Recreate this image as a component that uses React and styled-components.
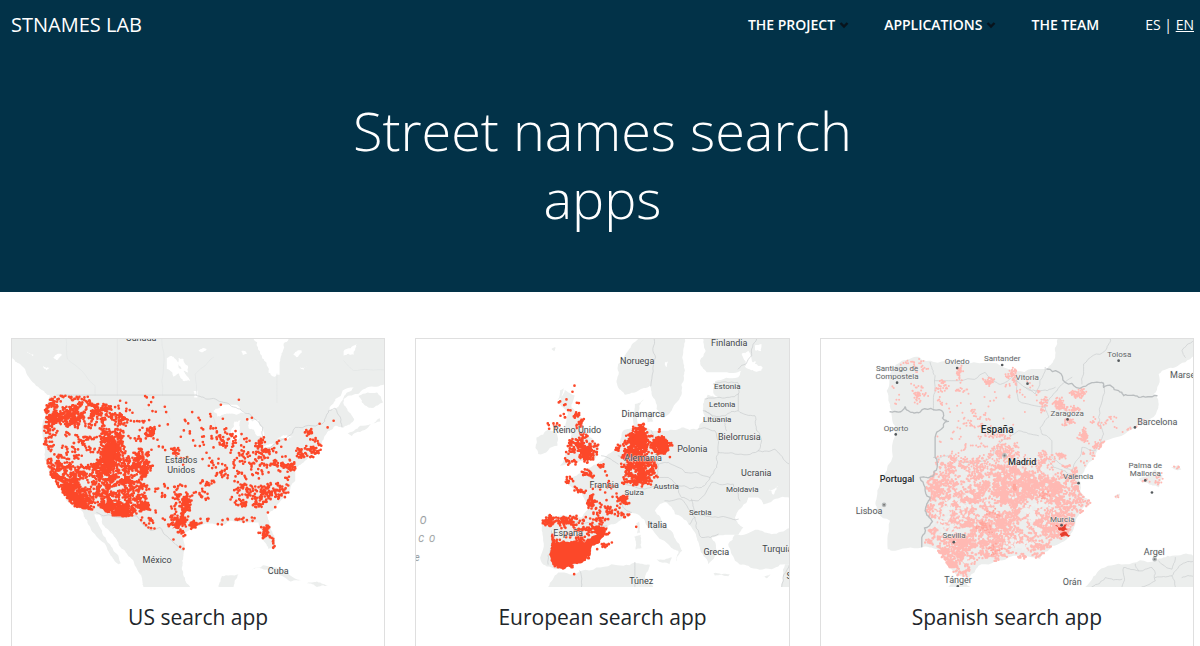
import React from 'react'
import styled, { createGlobalStyle } from 'styled-components';


const GlobalStyle = createGlobalStyle`
  * {
    box-sizing: border-box;
  }
  body {
    margin: 0;
    background: #fff;
    color: #212529;
    font-family: "Open Sans", "Noto Sans", sans-serif;
  }
`;

const Header = styled.header`
  padding: 0 6px 0 11px;
  background: #023248;
  color: #fff;
`;

const TopBar = styled.div`
  display: flex;
  align-items: center;
  justify-content: space-between;
  padding: 9px 0 11px;
`;

const Brand = styled.a`
  color: #fff;
  font-size: 20px;
  line-height: 32px;
  text-decoration: none;
`;

const Nav = styled.nav`
  display: flex;
  align-items: center;
  gap: 35px;
`;

const NavButton = styled.button`
  display: flex;
  align-items: center;
  gap: 4px;
  padding: 0;
  border: 0;
  background: none;
  color: #fff;
  font-family: inherit;
  font-size: 14px;
  font-weight: 600;
  line-height: 20px;
`;

const NavLink = styled.a`
  color: #fff;
  font-size: 14px;
  font-weight: 600;
  line-height: 20px;
  text-decoration: none;
`;

const Languages = styled.div`
  margin-left: 11px;
  font-size: 14px;
  line-height: 20px;
`;

const LanguageLink = styled.a`
  color: #fff;
  text-decoration: ${({ $active }) => ($active ? 'underline' : 'none')};
`;

const Title = styled.h1`
  max-width: 50%;
  margin: 0 auto;
  padding: 44px 0 60px;
  font-size: 54px;
  font-weight: 300;
  line-height: 68px;
  text-align: center;
`;

const CardList = styled.main`
  display: grid;
  grid-template-columns: repeat(3, 1fr);
  gap: 30px;
  padding: 46px 6px 0 11px;
`;

const Card = styled.article`
  border: 1px solid #dfdfdf;
  padding-bottom: 40px;
`;

const MapSvg = styled.svg`
  display: block;
  width: 100%;
  height: auto;
  background: #fff;
`;

const MapLabel = styled.text`
  fill: ${({ $tone }) => $tone || '#3f4548'};
  stroke: #f3f5f4;
  stroke-width: 1px;
  stroke-opacity: 0.7;
  paint-order: stroke;
  font-family: Roboto, sans-serif;
  font-size: ${({ $size }) => $size || 9}px;
  font-weight: ${({ $weight }) => $weight || 400};
  font-style: ${({ $italic }) => ($italic ? 'italic' : 'normal')};
  text-anchor: middle;
`;

const CardTitle = styled.h2`
  margin: 15px 0 0;
  font-size: 21px;
  font-weight: 400;
  line-height: 30px;
  text-align: center;
`;


// small seeded generator, so that the maps are the same on every load
const createRandom = (seed) => () => {
  seed = (seed * 1664525 + 1013904223) % 4294967296;
  return seed / 4294967296;
}

const parse = (str) => str.trim().split(/\s+/).map((p) => p.split(',').map(Number));

// splits each segment and moves its middle a little, like a coast line
const rough = (str, closed, amount = 0.12) => {
  const random = createRandom(str.length * 97 + 5);
  let pts = parse(str);
  if (closed) pts.push(pts[0]);
  for (let k = 0; k < 3; k++) {
    const next = [pts[0]];
    for (let i = 1; i < pts.length; i++) {
      const [ax, ay] = pts[i - 1];
      const [bx, by] = pts[i];
      const m = (random() - 0.5) * 2 * amount;
      const flat = ax === bx || ay === by;
      next.push([
        (ax + bx) / 2 + (flat ? 0 : (by - ay) * m),
        (ay + by) / 2 - (flat ? 0 : (bx - ax) * m),
      ], pts[i]);
    }
    pts = next;
  }
  return 'M' + pts.map(([x, y]) => `${Math.round(x)},${Math.round(y)}`).join('L') + (closed ? 'Z' : '');
}

const inside = (x, y, poly) => {
  let hit = false;
  for (let i = 0, j = poly.length - 1; i < poly.length; j = i++) {
    const [xi, yi] = poly[i];
    const [xj, yj] = poly[j];
    if ((yi > y) !== (yj > y) && x < ((xj - xi) * (y - yi)) / (yj - yi) + xi) hit = !hit;
  }
  return hit;
}

// groups: [cx, cy, rx, ry, count, clump size]
const scatter = ({ groups, bounds, seed, density = 1 }) => {
  const random = createRandom(seed);
  const poly = bounds && parse(bounds);
  let d = '';
  groups.forEach(([cx, cy, rx, ry, count, clump = 1]) => {
    for (let i = 0; i < count * density; i += clump) {
      const angle = random() * Math.PI * 2;
      const r = Math.sqrt(random());
      let x = cx + Math.cos(angle) * r * rx;
      let y = cy + Math.sin(angle) * r * ry;
      for (let c = 0; c < clump; c++) {
        if (!poly || inside(x, y, poly)) d += `M${Math.round(x)} ${Math.round(y)}h.1`;
        x += (random() - 0.5) * 20;
        y += (random() - 0.5) * 16;
      }
    }
  });
  return d;
}

const US_WEST = '152,194 135,235 131,330 135,385 150,430 190,490 215,525 262,535 330,552 375,558 410,555 450,595 500,598 550,655 560,610 600,575 640,500 640,300 600,194';
const IBERIA = '248,180 262,120 290,90 340,78 390,95 455,100 590,108 680,115 725,115 850,160 890,155 955,195 1055,205 1055,240 990,290 900,330 860,390 820,440 825,480 857,515 815,560 795,615 740,645 705,685 600,687 520,705 490,740 455,735 430,710 395,655 352,645 380,570 360,540 375,500 350,440 385,435 390,380 390,320 430,270 410,240 310,240 255,243';

const MAPS = [
  {
    title: 'US search app',
    origin: [36, 25],
    land: [
      '36,25 36,80 60,100 90,145 130,180 150,195 133,235 130,330 133,385 150,430 190,490 215,525 245,540 262,570 285,610 310,635 330,670 355,700 362,697 345,665 320,630 300,590 283,550 300,552 315,590 345,620 375,660 400,690 425,740 430,768 570,768 555,745 545,710 550,670 553,640 545,610 575,590 620,578 665,585 690,570 740,575 775,575 785,600 790,630 805,655 825,650 822,615 808,580 800,550 830,525 860,490 885,450 885,410 910,395 945,365 965,335 985,300 1005,285 1030,290 1062,265 1042,240 1030,205 1070,190 1100,170 1154,160 1154,25',
      '655,768 665,735 715,730 700,768',
      '755,715 790,703 850,720 908,747 870,752 820,722 780,712',
      '920,757 950,752 988,765 950,768',
      '1042,308 1080,285 1138,262 1140,272 1085,300 1055,316',
      '1075,195 1130,185 1148,215 1115,232 1085,215',
    ],
    water: [
      '760,25 865,25 848,60 838,95 838,132 822,138 800,105 785,75',
      '640,240 665,222 710,222 745,245 710,252 680,248 650,258',
      '702,272 722,268 718,300 708,342 692,330 692,300',
      '740,262 775,268 790,300 788,325 765,305 745,292',
      '775,360 800,342 835,333 810,350',
      '832,325 850,313 880,316 860,328',
      '500,82 520,78 535,110 555,130 570,150 552,152 535,128 520,138 500,115',
      '535,82 550,85 563,128 550,120',
      '580,182 592,180 592,200 582,200',
      '80,60 100,72 98,76 82,66',
      '130,105 150,112 140,120',
      '160,80 185,70 170,88',
      '595,60 620,55 605,65',
      '725,60 740,68 728,72',
      '880,70 905,60 890,80',
      '900,110 925,105 910,118',
      '1030,62 1070,40 1060,72 1030,75',
      '985,240 1005,205 1060,170 1030,200',
    ],
    borders: ['588,193 620,205 670,215 720,235 760,262 788,290 790,325 775,358 830,335 885,290 965,280 985,240 1005,233 1025,288', '170,193 588,193', '290,545 345,558 410,555 450,598 480,590 520,635 550,660'],
    faint: ['198,25 202,85 285,165 285,193', '352,25 352,193', '485,25 487,193', '588,193 585,130 640,80', '830,130 830,215', '1030,90 1060,120 1154,118', '430,235 500,240 510,265', '640,260 650,330'],
    dots: [
      { color: '#fc4829', size: 8, seed: 11, density: 0.85, bounds: US_WEST, groups: [
        [215, 235, 90, 50, 260, 3], [200, 262, 70, 18, 190, 4], [320, 262, 60, 40, 160, 3],
        [145, 300, 22, 110, 130, 4], [205, 330, 70, 75, 80, 2], [330, 350, 40, 55, 200, 4],
        [180, 440, 45, 50, 280, 4], [215, 490, 40, 35, 280, 4], [247, 514, 24, 22, 200, 4],
        [255, 400, 80, 60, 180, 3], [360, 420, 80, 40, 340, 4], [425, 400, 20, 65, 170, 4],
        [335, 505, 60, 35, 200, 4], [355, 535, 42, 25, 240, 4], [300, 455, 95, 40, 180, 3],
        [325, 390, 22, 85, 220, 4], [430, 525, 18, 16, 80, 3], [450, 304, 13, 15, 50, 2],
        [440, 580, 26, 16, 24, 3], [408, 548, 25, 20, 22, 2], [553, 530, 20, 30, 60, 3],
        [538, 572, 20, 20, 70, 3], [548, 480, 22, 20, 28, 3], [500, 520, 45, 70, 48, 2],
        [470, 290, 90, 105, 14, 1], [515, 360, 28, 14, 22, 2], [385, 290, 50, 55, 50, 2],
        [260, 320, 30, 12, 26, 2], [400, 480, 40, 30, 120, 4],
      ] },
      { color: '#fc4829', size: 8, seed: 24, density: 0.85, groups: [
        [610, 290, 50, 40, 20, 2], [590, 370, 60, 45, 16], [660, 420, 26, 22, 26, 2],
        [620, 475, 36, 32, 40, 2], [560, 520, 12, 26, 22, 3],
        [582, 582, 10, 10, 26, 3], [675, 325, 34, 24, 42, 2], [740, 360, 50, 42, 38, 2],
        [775, 338, 10, 8, 22, 3], [740, 400, 45, 38, 48, 2], [750, 495, 56, 38, 140, 2],
        [820, 480, 32, 26, 65, 2], [795, 362, 14, 9, 22, 3], [830, 395, 45, 32, 48, 2],
        [865, 410, 16, 14, 30, 3], [915, 368, 34, 16, 48, 2], [945, 348, 20, 24, 26, 2],
        [930, 302, 16, 10, 12, 2], [640, 350, 80, 60, 10], [650, 572, 85, 10, 12],
        [740, 567, 45, 8, 13], [799, 585, 10, 20, 14, 2], [795, 608, 9, 14, 40, 3],
        [820, 638, 4, 14, 9, 1], [545, 610, 10, 10, 9, 2], [845, 440, 45, 55, 28, 2],
        [765, 440, 65, 40, 22], [705, 270, 55, 65, 9], [850, 335, 25, 15, 5],
      ] },
    ],
    solids: [
      { color: '#fc4829', points: '515,592 535,570 545,540 556,545 552,580 535,595' },
      { color: '#fc4829', points: '330,545 352,525 385,515 390,535 370,557 335,557' },
      { color: '#fc4829', points: '155,430 170,425 230,490 262,515 262,532 238,530 195,492' },
      { color: '#fc4829', points: '310,350 340,330 345,360 338,420 325,415' },
    ],
    fixed: '1000,270 958,279 982,290 520,626 540,648 550,654 360,210 378,216 435,196 440,200 453,214 446,223 457,241 467,243 498,244 576,244 554,267 662,222 796,360 825,529 803,545',
    labels: [
      { x: 422, y: 32, text: 'Canadá' },
      { x: 544, y: 397, text: 'Estados' },
      { x: 544, y: 426, text: 'Unidos' },
      { x: 472, y: 697, text: 'México' },
      { x: 835, y: 731, text: 'Cuba' },
    ],
  },
  {
    title: 'European search app',
    origin: [34, 25],
    land: [
      '635,150 640,100 670,60 700,25 840,25 832,80 840,120 830,160 825,200 800,240 775,262 755,235 740,190 735,165 700,180 660,192 640,170',
      '895,25 902,60 885,90 905,125 960,125 1010,120 1000,140 930,152 925,185 940,200 908,192 895,230 900,260 880,295 830,290 790,300 740,300 700,290 698,250 718,205 690,220 683,260 690,290 655,300 640,350 610,370 575,400 545,412 520,430 480,445 520,480 550,530 530,560 480,555 430,550 410,580 415,620 408,690 450,715 480,710 530,695 555,670 560,640 605,600 610,585 650,565 680,545 720,570 745,600 790,640 820,660 815,692 832,660 812,625 775,580 750,540 765,520 785,515 810,550 850,580 870,605 885,650 910,700 935,660 920,620 960,612 1000,612 1015,590 990,560 1010,530 1030,500 1060,500 1075,520 1100,512 1154,500 1154,25',
      '970,640 990,610 1060,597 1100,610 1154,592 1154,700 1100,715 1030,705 990,690',
      '430,768 460,725 530,720 620,700 690,695 735,702 720,740 745,768',
      '1130,768 1140,700 1154,700 1154,768',
      '480,178 510,195 500,230 530,260 540,300 580,345 570,385 500,398 465,405 490,360 500,310 480,290 490,250 465,220',
      '395,320 430,295 455,305 458,345 400,370 392,350',
      '688,618 708,612 710,652 692,656',
      '694,578 704,572 706,605 697,608',
      '755,685 802,680 795,700',
      '925,728 975,730 970,736 930,734',
      '1072,735 1100,730 1085,742',
      '465,180 478,172 470,200 458,210',
      '440,55 452,50 448,62',
      '722,255 740,245 745,272 728,275',
    ],
    water: [
      '1010,70 1030,60 1050,100 1075,112 1060,122 1020,108',
      '1050,45 1070,40 1068,62 1050,60',
      '1090,478 1120,465 1105,492',
      '780,95 790,90 785,110',
      '1040,95 1052,92 1060,118 1045,120',
    ],
    borders: [
      '748,25 752,80 738,165', '1055,25 1040,75 1000,115', '925,160 998,155 1000,190 945,200 900,205',
      '1000,190 1000,240 960,255 895,240', '1000,240 1050,255 1055,300 1070,330 1060,360 990,370 940,365 930,300 880,295',
      '940,365 935,410 915,440 840,425 790,395 760,400 758,440', '1060,360 1110,355 1154,400', '915,440 890,470 820,465 790,440 760,440',
      '820,465 830,500 880,510 920,455 985,460 1005,510', '780,510 830,505 870,560 855,580', '860,505 870,545 940,560 1000,565',
      '870,560 890,620 940,610', '640,375 665,400 660,460 720,475 780,470', '665,480 655,530 680,545',
      '480,560 550,575 605,585', '440,600 440,650 430,700', '690,695 690,768', '525,720 530,768', '1130,768 1154,700', '590,375 640,400', '740,300 760,340 758,400', '900,240 960,270 965,300',
    ],
    faint: [],
    dots: [
      { color: '#fc4829', size: 8, seed: 7, density: 0.8, groups: [
        [530, 335, 32, 28, 100, 3], [545, 370, 24, 20, 130, 3], [510, 365, 36, 26, 36, 2],
        [495, 395, 28, 6, 13, 2], [575, 345, 10, 10, 8, 2], [500, 250, 28, 14, 22, 2],
        [525, 280, 10, 22, 30, 3], [490, 215, 30, 10, 5, 1], [445, 285, 16, 12, 8, 2],
        [705, 315, 30, 32, 200, 3], [765, 345, 24, 26, 170, 3], [690, 350, 38, 32, 220, 3],
        [765, 300, 16, 5, 4], [690, 375, 38, 18, 130, 3], [702, 415, 46, 32, 270, 3],
        [698, 448, 42, 14, 110, 3], [740, 415, 14, 40, 45, 3], [640, 352, 10, 8, 8, 2],
        [550, 428, 18, 6, 30, 3], [600, 405, 22, 4, 9, 2], [495, 452, 14, 10, 14, 2],
        [530, 480, 20, 14, 16, 2], [556, 515, 12, 16, 45, 4], [655, 507, 8, 12, 42, 3],
        [600, 495, 55, 35, 24, 1], [590, 540, 30, 16, 24, 2], [625, 535, 28, 15, 18, 2],
        [650, 555, 12, 8, 17, 3], [600, 450, 50, 35, 14, 1], [430, 572, 17, 15, 52, 3],
        [490, 572, 34, 13, 70, 3], [455, 568, 30, 10, 28, 3], [540, 595, 36, 16, 48, 3],
        [590, 600, 16, 12, 75, 4], [555, 570, 24, 8, 9, 2], [510, 628, 50, 14, 60, 3],
        [603, 641, 8, 4, 14, 2], [585, 565, 18, 10, 16, 2], [445, 650, 5, 45, 40, 1],
        [545, 675, 10, 20, 24, 1], [480, 706, 30, 5, 26, 1],
      ] },
    ],
    solids: [
      { color: '#fc4829', points: '442,640 455,628 480,632 505,630 540,640 565,615 595,592 608,590 600,612 562,645 555,675 530,697 495,705 472,716 452,705 437,690' },
      { color: '#fc4829', points: '695,300 718,294 728,320 716,350 692,350 682,325' },
      { color: '#fc4829', points: '758,338 778,328 790,350 783,372 758,362' },
      { color: '#fc4829', points: '692,408 716,400 718,440 698,448' },
    ],
    fixed: '509,165 503,183 466,212 516,216 522,217 694,588 577,655 621,635 508,730 795,379 433,294',
    labels: [
      { x: 973, y: 47, text: 'Finlandia' },
      { x: 696, y: 99, text: 'Noruega' },
      { x: 966, y: 176, text: 'Estonia', size: 8 },
      { x: 952, y: 230, text: 'Letonia', size: 8 },
      { x: 937, y: 273, text: 'Lituania', size: 8 },
      { x: 715, y: 260, text: 'Dinamarca' },
      { x: 518, y: 308, text: 'Reino Unido' },
      { x: 1003, y: 327, text: 'Bielorrusia' },
      { x: 863, y: 364, text: 'Polonia' },
      { x: 715, y: 390, text: 'Alemania' },
      { x: 1055, y: 435, text: 'Ucrania' },
      { x: 598, y: 471, text: 'Francia' },
      { x: 784, y: 474, text: 'Austria', size: 8 },
      { x: 688, y: 494, text: 'Suiza', size: 8 },
      { x: 1011, y: 485, text: 'Moldavia', size: 8 },
      { x: 887, y: 552, text: 'Serbia', size: 8 },
      { x: 757, y: 591, text: 'Italia' },
      { x: 491, y: 616, text: 'España' },
      { x: 935, y: 673, text: 'Grecia' },
      { x: 1116, y: 663, text: 'Turquía' },
      { x: 708, y: 761, text: 'Túnez' },
      { x: 1170, y: 745, text: 'Siria' },
      { x: 54, y: 579, text: 'O', italic: true, size: 10, tone: '#999d9f' },
      { x: 49, y: 635, text: 'C', italic: true, size: 9, tone: '#999d9f' },
      { x: 82, y: 635, text: 'O', italic: true, size: 9, tone: '#999d9f' },
      { x: 36, y: 690, text: 'e', italic: true, size: 10, tone: '#999d9f' },
    ],
  },
  {
    title: 'Spanish search app',
    origin: [48, 25],
    land: [
      '245,180 260,120 290,90 340,78 390,95 455,100 590,108 680,115 725,115 750,80 757,25 1166,25 1166,75 1110,110 1060,130 1045,190 1058,205 1055,240 990,290 900,330 860,390 820,440 825,480 857,515 815,560 795,615 740,645 705,685 600,687 520,705 490,740 455,735 430,710 395,655 350,650 260,660 248,655 255,570 218,545 215,500 245,420 270,300 260,240 250,210',
      '840,768 880,720 960,700 1050,690 1100,675 1166,677 1166,768',
      '430,768 440,755 480,755 495,768',
      '1000,445 1050,415 1072,435 1060,470 1038,462 1012,456',
      '1098,410 1118,404 1128,418 1108,416',
      '928,495 945,488 942,500 932,504',
    ],
    water: [],
    borders: [
      '375,95 390,135 385,200 385,238', '390,150 470,150 540,125 580,160 620,140 660,170 690,190 720,110', '630,140 640,210 720,230 730,260 705,290 710,310 740,330 740,380 800,420 830,350 870,360 895,310 880,260 895,160',
      '755,180 800,140', '830,160 835,100 900,60 915,25', '385,380 430,375 470,395 540,390 590,330 640,300 700,315', '720,230 755,180',
      '1166,30 1130,60 1140,80', '730,385 745,410 780,420 820,440', '660,170 700,180 750,170',
      '950,768 955,710 1000,720 1040,710 1050,750 1010,768', '1050,740 1100,735 1130,700 1166,690', '860,768 900,740 950,745', '1100,735 1110,768', '1000,720 990,700', '1060,690 1100,715 1110,680', '1130,740 1166,735',
    ],
    heavy: [
      '255,243 300,228 310,240 345,244 410,240 412,262 430,272 390,320 390,380 383,437 345,440 375,500 360,540 382,572 350,620 350,648',
      '725,115 780,155 850,160 890,155 895,170 940,180 955,195 1000,200 1055,195',
    ],
    faint: [],
    dots: [
      { color: '#ffb9b3', size: 6, seed: 31, density: 1, bounds: IBERIA, groups: [
        [330, 100, 50, 25, 34, 2], [345, 170, 18, 35, 40, 4], [300, 190, 60, 40, 18, 2],
        [410, 180, 18, 35, 38, 4], [462, 125, 8, 20, 34, 3], [470, 180, 20, 6, 16, 2],
        [548, 153, 18, 8, 32, 3], [620, 130, 14, 20, 50, 4], [650, 175, 60, 35, 22, 2],
        [715, 220, 10, 28, 30, 3], [762, 220, 10, 14, 80, 3], [820, 188, 18, 9, 65, 3],
        [795, 235, 30, 6, 44, 3], [788, 275, 13, 7, 38, 3], [835, 313, 10, 16, 80, 3],
        [885, 342, 15, 7, 50, 3], [765, 375, 9, 8, 30, 3], [850, 385, 25, 30, 26, 3],
        [960, 275, 100, 35, 36, 2], [885, 270, 24, 20, 14, 2], [510, 265, 45, 28, 38, 2],
        [450, 310, 60, 60, 44, 2], [560, 240, 150, 60, 22, 1], [560, 330, 50, 25, 50, 3],
        [600, 362, 50, 25, 150, 4], [715, 385, 10, 28, 46, 3], [430, 400, 60, 30, 80, 3],
        [520, 402, 65, 28, 130, 3], [700, 400, 70, 40, 50, 2],
      ] },
      { color: '#ffb9b3', size: 7, seed: 42, density: 1, bounds: IBERIA, groups: [
        [630, 460, 70, 60, 620, 5], [690, 470, 80, 35, 280, 5], [760, 485, 65, 55, 300, 5],
        [800, 440, 40, 50, 90, 4], [470, 460, 100, 65, 400, 4], [390, 500, 40, 55, 130, 4],
        [550, 530, 110, 75, 600, 5], [600, 590, 110, 60, 420, 5], [440, 570, 80, 60, 220, 5],
        [740, 580, 70, 40, 440, 5], [450, 660, 55, 50, 440, 5], [540, 640, 80, 45, 270, 5],
        [640, 660, 85, 30, 90, 4], [460, 715, 35, 22, 80, 5], [370, 615, 24, 26, 50, 4],
        [830, 520, 30, 35, 60, 4], [700, 650, 40, 35, 50, 3],
      ] },
      { color: '#eff1f0', size: 8, seed: 63, bounds: IBERIA, groups: [
        [480, 500, 70, 45, 50, 4], [430, 560, 50, 45, 44, 4], [675, 550, 18, 30, 60, 5],
        [650, 640, 55, 26, 55, 4], [700, 520, 20, 8, 20, 4], [580, 490, 230, 150, 30, 1],
        [480, 695, 20, 6, 12, 4], [700, 600, 7, 6, 15, 2], [420, 600, 30, 20, 26, 4],
      ] },
      { color: '#ffa59b', size: 6, seed: 55, bounds: IBERIA, groups: [
        [628, 470, 5, 9, 40, 1], [535, 590, 22, 12, 32, 3], [720, 490, 25, 12, 14, 2],
        [570, 650, 15, 20, 15, 2], [570, 550, 22, 18, 14, 2],
      ] },
      { color: '#ffb9b3', size: 6, seed: 15, groups: [
        [1058, 448, 10, 16, 18, 2], [1015, 448, 12, 5, 6, 2], [1112, 410, 12, 5, 7, 2], [936, 497, 5, 4, 3, 1],
      ] },
    ],
    solids: [
      { color: '#e63d2c', points: '750,581 768,590 786,579 782,592 788,596 774,601 758,597' },
      { color: '#e63d2c', points: '764,610 770,604 782,603 796,613 790,619 780,614 766,619' },
    ],
    fixed: '',
    cities: '276,156 456,112 591,103 667,159 940,90 272,311 787,266 989,290 820,457 1020,449 446,634 458,766 769,583 1040,485',
    capitals: '598,374 237,522 1048,685',
    labels: [
      { x: 276, y: 120, text: 'Santiago de', size: 8, tone: '#5e6366' },
      { x: 276, y: 144, text: 'Compostela', size: 8, tone: '#5e6366' },
      { x: 456, y: 101, text: 'Oviedo', size: 8, tone: '#5e6366' },
      { x: 591, y: 92, text: 'Santander', size: 8, tone: '#5e6366' },
      { x: 667, y: 147, text: 'Vitoria', size: 8, tone: '#5e6366' },
      { x: 941, y: 78, text: 'Tolosa', size: 8, tone: '#5e6366' },
      { x: 1145, y: 143, text: 'Marsella', size: 9, tone: '#555a5d' },
      { x: 272, y: 300, text: 'Oporto', size: 8, tone: '#5e6366' },
      { x: 787, y: 255, text: 'Zaragoza', size: 8, tone: '#5e6366' },
      { x: 1056, y: 282, text: 'Barcelona', size: 9, tone: '#555a5d' },
      { x: 576, y: 307, text: 'España', size: 10, weight: 500, tone: '#25292c' },
      { x: 650, y: 402, text: 'Madrid', size: 9, weight: 500, tone: '#25292c' },
      { x: 275, y: 455, text: 'Portugal', size: 9, weight: 500, tone: '#25292c' },
      { x: 820, y: 445, text: 'Valencia', size: 8, tone: '#555a5d' },
      { x: 1021, y: 413, text: 'Palma de', size: 8, tone: '#5e6366' },
      { x: 1021, y: 437, text: 'Mallorca', size: 8, tone: '#5e6366' },
      { x: 191, y: 549, text: 'Lisboa', size: 9, tone: '#555a5d' },
      { x: 770, y: 573, text: 'Murcia', size: 8, tone: '#5e6366' },
      { x: 446, y: 623, text: 'Sevilla', size: 8, tone: '#5e6366' },
      { x: 1048, y: 672, text: 'Argel', size: 9, tone: '#555a5d' },
      { x: 458, y: 756, text: 'Tánger', size: 9, tone: '#555a5d' },
      { x: 802, y: 762, text: 'Orán', size: 9, tone: '#555a5d' },
    ],
  },
];


const ChevronDown = () => (
  <svg width="10" height="8" viewBox="0 0 10 8" aria-hidden="true">
    <path d="M1.5 2L5 5.5 8.5 2" fill="none" stroke="#08131c" strokeWidth="2.4" />
  </svg>
)

const DotMap = ({ map }) => {
  const [ox, oy] = map.origin;

  return (
    <MapSvg viewBox="0 0 372 248" role="img" aria-label={map.title}>
      <g transform={`scale(${1 / 3}) translate(${-ox} ${-oy})`} fill="none" strokeLinecap="round" strokeLinejoin="round">
        {map.land.map((p) => <path key={p} d={rough(p, true)} fill="#eceeed" />)}
        {map.water.map((p) => <path key={p} d={rough(p, true, 0.2)} fill="#fff" />)}
        {map.faint.map((p) => <path key={p} d={rough(p, false, 0.05)} stroke="#e2e5e5" strokeWidth="2" />)}
        {map.borders.map((p) => <path key={p} d={rough(p, false)} stroke="#c9cccd" strokeWidth="2" />)}
        {map.dots.map((layer) => (
          <path key={layer.seed} d={scatter(layer)} stroke={layer.color} strokeWidth={layer.size} />
        ))}
        {map.solids.map((s) => <path key={s.points} d={rough(s.points, true, 0.2)} fill={s.color} />)}
        {map.fixed && <path d={parse(map.fixed).map(([x, y]) => `M${x} ${y}h.1`).join('')} stroke="#fc4829" strokeWidth="8" />}
        {map.heavy && map.heavy.map((p) => <path key={p} d={rough(p, false, 0.2)} stroke="#b9bdbf" strokeWidth="4" />)}
        {map.cities && parse(map.cities).map(([x, y]) => <circle key={x} cx={x} cy={y} r="4" fill="#555a5d" />)}
        {map.capitals && parse(map.capitals).map(([x, y]) => <circle key={x} cx={x} cy={y} r="5" fill="#777" stroke="#b5b9ba" strokeWidth="4" />)}
      </g>
      {map.labels.map((label) => (
        <MapLabel
          key={label.text + label.x}
          x={Math.round((label.x - ox) / 3)}
          y={Math.round((label.y - oy) / 3)}
          $size={label.size}
          $weight={label.weight}
          $italic={label.italic}
          $tone={label.tone}
        >
          {label.text}
        </MapLabel>
      ))}
    </MapSvg>
  );
}

const App = () => {
  return (
    <>
      <GlobalStyle />
      <Header>
        <TopBar>
          <Brand href="#">STNAMES LAB</Brand>
          <Nav>
            <NavButton type="button" aria-haspopup="true">THE PROJECT <ChevronDown /></NavButton>
            <NavButton type="button" aria-haspopup="true">APPLICATIONS <ChevronDown /></NavButton>
            <NavLink href="#team">THE TEAM</NavLink>
            <Languages>
              <LanguageLink href="#es">ES</LanguageLink> | <LanguageLink href="#en" $active>EN</LanguageLink>
            </Languages>
          </Nav>
        </TopBar>
        <Title>Street names search apps</Title>
      </Header>
      <CardList>
        {MAPS.map((map) => (
          <Card key={map.title}>
            <DotMap map={map} />
            <CardTitle>{map.title}</CardTitle>
          </Card>
        ))}
      </CardList>
    </>
  )
}

export default App;
